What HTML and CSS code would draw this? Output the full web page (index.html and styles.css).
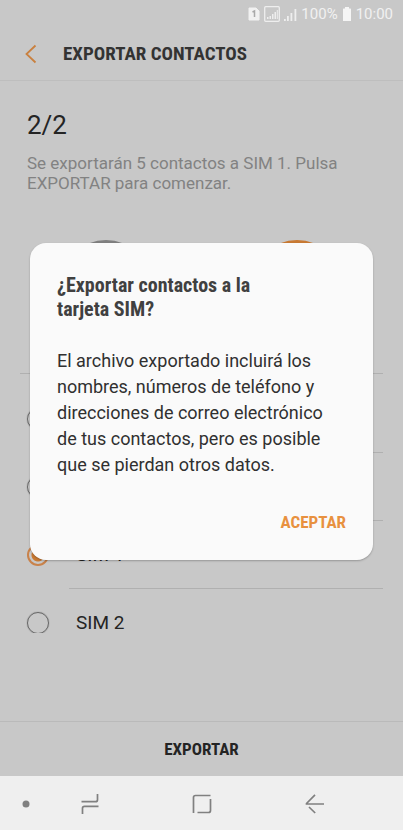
FILE: index.html
```html
<!DOCTYPE html>
<html lang="es">
<head>
<meta charset="utf-8">
<meta name="viewport" content="width=device-width, initial-scale=1">
<title>Exportar contactos</title>
<link rel="stylesheet" href="styles.css">
</head>
<body>
<div class="screen">
  <div class="status">
    <svg width="12" height="14" viewBox="0 0 12 14" aria-hidden="true"><path d="M1 1h7l3 3v9H1z" fill="#f1f1f1" stroke="#f1f1f1" stroke-linejoin="round"/><path d="M4.500 5L6.500 4v6" fill="none" stroke="#a9a9a9" stroke-width="1.500"/></svg>
    <svg width="33" height="16" viewBox="0 0 33 16" aria-hidden="true"><rect x=".7" y=".7" width="14.600" height="14.600" rx="1" fill="none" stroke="#eee" stroke-width="1.300"/><path d="M3 11h1.500v2H3zM5.500 10H7v3H5.500zM8 8h1.500v5H8zM10.500 6H12v7h-1.500zM12.800 4h1v9h-1zM20 13h1.800v2H20zM23 10h1.800v5H23zM26.500 7h1.800v8h-1.800zM30.500 3h1.800v12h-1.800z" fill="#eee"/></svg>
    <span>100%</span>
    <svg width="10" height="14" viewBox="0 0 10 14" aria-hidden="true"><path d="M3 0h4v1.500h1.500l.5.500v12H1V2l.5-.5H3z" fill="#f5f5f5"/></svg>
    <span>10:00</span>
  </div>
  <header class="header">
    <button class="back" type="button" aria-label="Atrás"><svg width="12" height="20" viewBox="0 0 12 20"><path d="M10.500 1.500L1.500 10l9 8.500" fill="none" stroke="#c9803f" stroke-width="1.800"/></svg></button>
    <h1 class="title">EXPORTAR CONTACTOS</h1>
  </header>
  <main class="content">
    <p class="step">2/2</p>
    <p class="summary">Se exportarán 5 contactos a SIM 1. Pulsa EXPORTAR para comenzar.</p>
    <div class="route">
      <svg width="88" height="88" viewBox="0 0 88 88" aria-hidden="true"><circle cx="44" cy="44" r="44" fill="#808080"/></svg>
      <svg width="88" height="88" viewBox="0 0 88 88" aria-hidden="true"><circle cx="44" cy="44" r="44" fill="#c97a33"/></svg>
    </div>
    <div class="options">
      <label class="option"><input type="radio" name="target" aria-label="Teléfono"><span class="option-name"></span></label>
      <label class="option"><input type="radio" name="target" aria-label="Tarjeta SD"><span class="option-name"></span></label>
      <label class="option"><input type="radio" name="target" checked><span class="option-name">SIM 1</span></label>
      <label class="option"><input type="radio" name="target"><span class="option-name">SIM 2</span></label>
    </div>
  </main>
  <footer class="footer"><button class="export" type="button">EXPORTAR</button></footer>
  <nav class="nav">
    <button type="button" aria-label="Ocultar barra"><svg width="8" height="8" viewBox="0 0 8 8"><circle cx="4" cy="4" r="3.500" fill="#808080"/></svg></button>
    <button type="button" aria-label="Recientes"><svg width="20" height="22" viewBox="0 0 20 22"><path d="M1.500 8.700H15.500q2 0 2-2V1M18.500 13.300H4.500q-2 0-2 2V21" fill="none" stroke="#808080" stroke-width="1.700"/></svg></button>
    <button type="button" aria-label="Inicio"><svg width="20" height="20" viewBox="0 0 20 20"><path d="M18.500 1.500H3.500Q1.500 1.500 1.500 3.500v15.500M18.500 5v11.500q0 2-2 2H5.500" fill="none" stroke="#808080" stroke-width="1.700"/></svg></button>
    <button type="button" aria-label="Volver"><svg width="20" height="20" viewBox="0 0 20 20"><path d="M10 .8L1.500 9.500V10h17.500M4 13l6.200 6" fill="none" stroke="#808080" stroke-width="1.700"/></svg></button>
  </nav>
  <div class="overlay">
    <section class="dialog" role="dialog" aria-labelledby="dialog-title">
      <h2 class="dialog-title" id="dialog-title">¿Exportar contactos a la tarjeta SIM?</h2>
      <p class="dialog-text">El archivo exportado incluirá los nombres, números de teléfono y direcciones de correo electrónico de tus contactos, pero es posible que se pierdan otros datos.</p>
      <button class="accept" type="button">ACEPTAR</button>
    </section>
  </div>
</div>
</body>
</html>
```
FILE: styles.css
```css
* { box-sizing: border-box; }
body { margin: 0; font-family: Roboto, "Liberation Sans", sans-serif; color: #242424; }
h1, h2, p { margin: 0; }
button { border: 0; padding: 0; background: none; font: inherit; display: flex; align-items: center; justify-content: center; }
svg { display: block; }

.screen { position: relative; min-height: 100vh; display: flex; flex-direction: column; background: #c8c8c8; }

.status { display: flex; align-items: center; justify-content: flex-end; gap: 4px; height: 28px; padding-right: 10px; color: #f1f1f1; font-size: 15px; }

.header { display: flex; align-items: center; height: 53px; padding-left: 25px; border-bottom: 1px solid #bebebe; }
.back { width: 12px; margin-right: 26px; }
.title, .dialog-title, .export, .accept { font-family: "Roboto Condensed", Roboto, sans-serif; font-weight: 700; }
.title { font-size: 19px; line-height: 24px; color: #333; }

.content { flex: 1; margin-bottom: 88px; overflow: hidden; padding: 28px 20px 0; }
.step { padding-left: 7px; font-size: 26px; line-height: 32px; }
.summary { padding: 12px 7px 0; font-size: 17px; line-height: 20px; color: #828282; }
.route { display: flex; justify-content: space-between; margin-top: 47px; padding: 0 42px 45px; border-bottom: 1px solid #b0b0b0; }

.options { height: 259px; padding-top: 11px; overflow: hidden; }
.option { display: flex; height: 68px; align-items: center; }
.option input { appearance: none; flex: none; width: 22px; height: 22px; margin: 0 20px 0 7px; border: 1px solid #666; border-radius: 50%; box-shadow: 0 0 1px #666; }
.option input:checked { border: 2px solid #c9824a; background: radial-gradient(circle, #c97a33 6px, transparent 7px); box-shadow: none; }
.option-name { flex: 1; height: 68px; padding-left: 7px; font-size: 19px; line-height: 68px; border-bottom: 1px solid #b0b0b0; }
.option:last-child .option-name { border-bottom: 0; }

.footer { border-top: 1px solid #bababa; }
.export { width: 100%; height: 54px; font-size: 17px; color: #242424; }

.nav { display: grid; grid-template-columns: 52px 75px 1fr 127px; height: 54px; padding-top: 2px; background: #efefef; }
.nav button:last-child { justify-content: flex-start; padding-left: 29px; }

.overlay { position: absolute; inset: 0; padding: 243px 30px 0; }
.dialog { padding: 30px 27px 20px; border-radius: 16px; background: #fafafa; box-shadow: 0 1px 2px rgba(0, 0, 0, .25); }
.dialog-title { max-width: 220px; font-size: 20px; line-height: 24px; color: #404040; }
.dialog-text { padding-top: 27px; font-size: 18px; line-height: 26px; color: #303030; }
.accept { height: 36px; margin: 26px 0 0 auto; font-size: 17px; color: #e8913f; }
```
